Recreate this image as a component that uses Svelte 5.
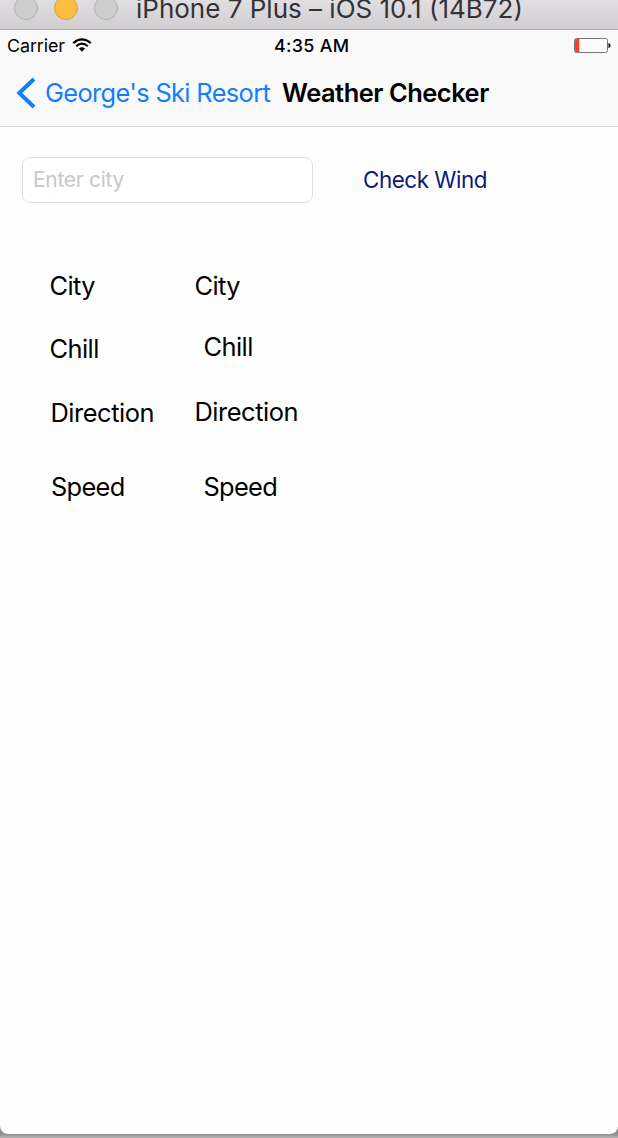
<script>
  const rows = [
    { name: 'city', label: 'City', value: 'City' },
    { name: 'chill', label: 'Chill', value: 'Chill' },
    { name: 'direction', label: 'Direction', value: 'Direction' },
    { name: 'speed', label: 'Speed', value: 'Speed' }
  ];
</script>

<div class="window">
  <header class="titlebar">
    <i class="light"></i>
    <i class="light amber"></i>
    <i class="light"></i>
    <span class="device">iPhone 7 Plus – iOS 10.1 (14B72)</span>
  </header>
  <div class="screen">
    <div class="status">
      <div class="carrier">
        <span class="carrier-name">Carrier</span>
        <svg width="20" height="14" viewBox="0 0 20 14" fill="none" stroke="#000">
          <path d="M1.2 5.1Q10 -2.2 18.8 5.1" stroke-width="2.1" />
          <path d="M4.2 8.2Q10 3.2 15.8 8.2" stroke-width="2.1" />
          <path d="M6.9 10.6Q10 7.9 13.1 10.6L10 13.7Z" fill="#000" stroke="none" />
        </svg>
      </div>
      <span class="time">4:35 AM</span>
      <svg class="battery" width="37" height="16" viewBox="0 0 37 16">
        <rect x=".5" y=".5" width="33" height="14" rx="2" fill="#fbfbfb" stroke="#777" />
        <path d="M2 1h3.3v13H2a1 1 0 0 1-1-1V2a1 1 0 0 1 1-1z" fill="#ff3b30" />
        <path d="M34.5 5Q36.5 5.3 36.5 7.5T34.5 10z" fill="#000" />
      </svg>
    </div>
    <nav>
      <svg class="chevron" width="20" height="32" viewBox="0 0 20 32">
        <path d="M18 2L3.3 16L18 30" fill="none" stroke="#147efb" stroke-width="4" />
      </svg>
      <span class="back">George's Ski Resort</span>
      <span class="heading">Weather Checker</span>
    </nav>
    <main>
      <div class="search">
        <input type="text" placeholder="Enter city" />
        <button>Check Wind</button>
      </div>
      {#each rows as row}
        <div class="row {row.name}">
          <span class="label">{row.label}</span>
          <span class="value">{row.value}</span>
        </div>
      {/each}
    </main>
  </div>
</div>

<style>
  :global(body) { margin: 0; }
  .window {
    width: 618px;
    height: 1138px;
    overflow: hidden;
    box-sizing: border-box;
    padding-bottom: 4px;
    background: linear-gradient(#8c8c8c 0, #8c8c8c 1134px, #b9b9b9 1138px);
    font-family: Inter, "Liberation Sans", sans-serif;
    color: #000;
  }
  .titlebar {
    height: 30px;
    box-sizing: border-box;
    display: flex;
    border-bottom: 1px solid #aeacae;
    background: linear-gradient(#e0dee0, #d0ced0);
  }
  .light {
    width: 24px;
    height: 24px;
    box-sizing: border-box;
    margin: -4px 0 0 14px;
    border: 1px solid #b2b1b2;
    border-radius: 50%;
    background: #cfcecf;
  }
  .light + .light { margin-left: 16px; }
  .amber { background: #fdbd40; border-color: #dba03c; }
  .device {
    margin-left: 18px;
    height: 18px;
    font-size: 26px;
    line-height: 18px;
    color: #343236;
    white-space: nowrap;
  }
  .screen {
    height: 1104px;
    background: #fefefe;
    border-radius: 0 0 8px 8px;
    overflow: hidden;
  }
  .status {
    height: 31px;
    display: grid;
    grid-template-columns: 274px 1fr 44px;
    background: #f9f9f9;
    font-size: 17.9px;
    line-height: 31px;
  }
  .carrier { display: flex; padding-left: 7px; }
  .carrier-name { width: 65px; letter-spacing: -0.1px; }
  .carrier svg { margin-top: 8px; }
  .time { font-weight: 500; letter-spacing: 0.3px; }
  .battery { margin-top: 8px; }
  nav {
    height: 66px;
    box-sizing: border-box;
    display: flex;
    padding-left: 16px;
    border-bottom: 1px solid #d2d2d2;
    background: #f9f9f9;
    font-size: 25.4px;
    line-height: 64px;
    white-space: nowrap;
  }
  .chevron { margin-top: 16px; }
  .back { width: 237px; padding-left: 9px; box-sizing: border-box; color: #147efb; letter-spacing: -0.65px; }
  .heading { font-weight: 600; margin-left: 9px; letter-spacing: -0.45px; }
  .search { display: flex; padding: 30px 0 0 22px; }
  input {
    width: 291px;
    height: 46px;
    box-sizing: border-box;
    border: 1px solid #dedee0;
    border-radius: 8px;
    padding: 0 10px 1px;
    background: #fff;
    font: 20.9px Inter, sans-serif;
    letter-spacing: -0.25px;
    outline: 0;
  }
  input::placeholder { color: #c7c7cc; opacity: 1; }
  button {
    margin-left: 50px;
    padding: 0 0 2px;
    height: 46px;
    border: 0;
    background: none;
    color: #0a1a78;
    font: 22.4px Inter, sans-serif;
    letter-spacing: -0.45px;
  }
  .row {
    display: grid;
    grid-template-columns: 145px 200px;
    align-items: start;
    padding-left: 49.5px;
    font-size: 25.4px;
    line-height: 32px;
    letter-spacing: -0.55px;
  }
  .city { margin-top: 67px; }
  .chill { margin-top: 29px; }
  .chill .label { margin-top: 2px; }
  .chill .value { margin-left: 9px; }
  .direction { margin-top: 31px; letter-spacing: -0.45px; }
  .direction .label { margin: 1px 0 0 1px; }
  .speed { margin-top: 42px; letter-spacing: -0.7px; }
  .speed .label { margin-left: 1.5px; }
  .speed .value { margin-left: 9px; }
</style>
